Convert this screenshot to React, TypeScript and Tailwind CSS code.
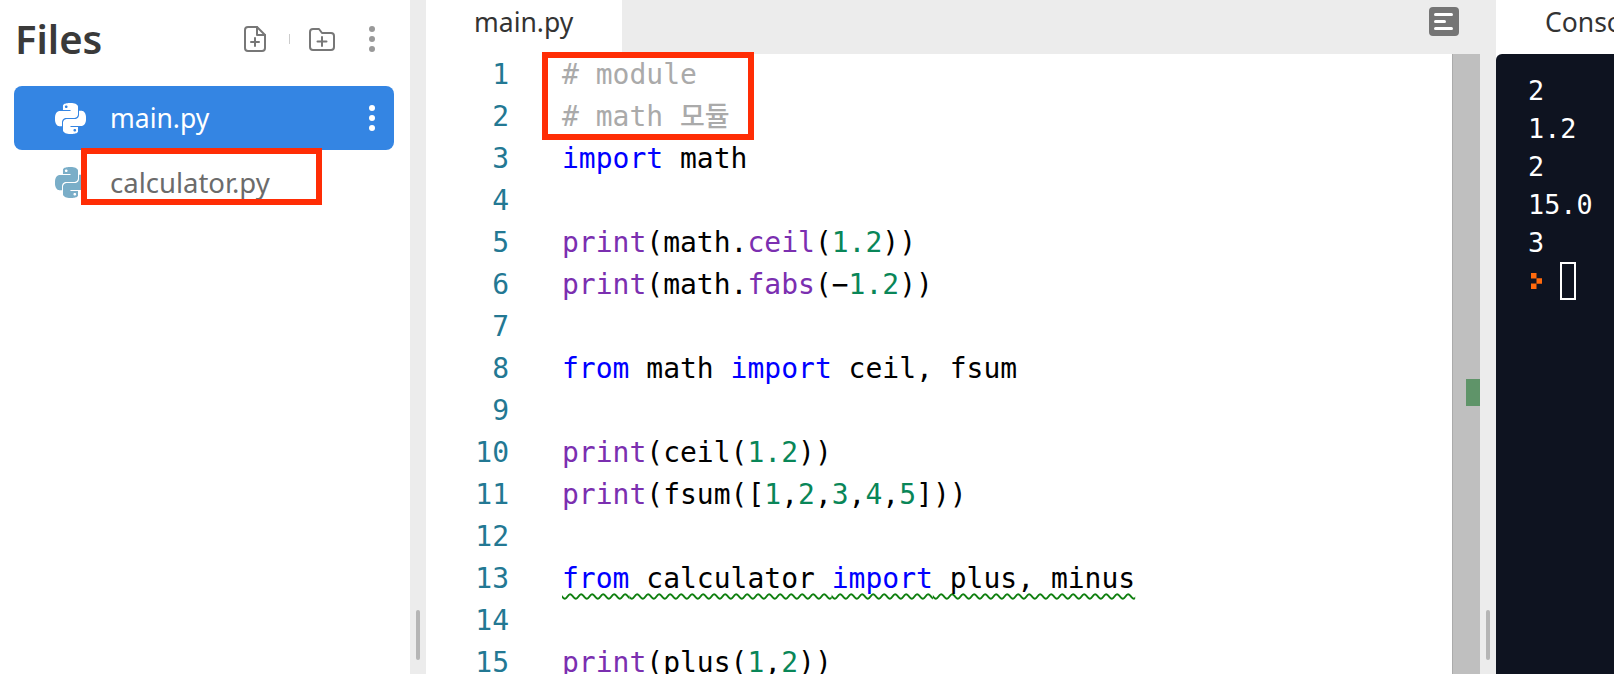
import React from "react";
import { SiPython } from "react-icons/si";

const uiFont = "font-['Noto_Sans',sans-serif]";
const monoFont = "font-['DejaVu_Sans_Mono','Noto_Sans_CJK_KR',monospace]";

const Kw = ({ children }: { children: React.ReactNode }) => (
  <span className="text-[#0000ff]">{children}</span>
);
const Fn = ({ children }: { children: React.ReactNode }) => (
  <span className="text-[#7b2fb0]">{children}</span>
);
const Num = ({ children }: { children: React.ReactNode }) => (
  <span className="text-[#098658]">{children}</span>
);
const Cm = ({ children }: { children: React.ReactNode }) => (
  <span className="text-[#aaaaaa]">{children}</span>
);

const codeLines: React.ReactNode[] = [
  <Cm># module</Cm>,
  <Cm>
    # math <span className="text-[27px] font-medium">모듈</span>
  </Cm>,
  <>
    <Kw>import</Kw> math
  </>,
  null,
  <>
    <Fn>print</Fn>(math.<Fn>ceil</Fn>(<Num>1.2</Num>))
  </>,
  <>
    <Fn>print</Fn>(math.<Fn>fabs</Fn>(−<Num>1.2</Num>))
  </>,
  null,
  <>
    <Kw>from</Kw> math <Kw>import</Kw> ceil, fsum
  </>,
  null,
  <>
    <Fn>print</Fn>(ceil(<Num>1.2</Num>))
  </>,
  <>
    <Fn>print</Fn>(fsum([<Num>1</Num>,<Num>2</Num>,<Num>3</Num>,<Num>4</Num>,<Num>5</Num>]))
  </>,
  null,
  <span className="underline decoration-wavy decoration-[#0f7f0f] decoration-2 underline-offset-[5px] [text-decoration-skip-ink:none]">
    <Kw>from</Kw> calculator <Kw>import</Kw> plus, minus
  </span>,
  null,
  <>
    <Fn>print</Fn>(plus(<Num>1</Num>,<Num>2</Num>))
  </>,
];

const consoleLines = ["2", "1.2", "2", "15.0", "3"];

function Kebab({ color }: { color: string }) {
  return (
    <svg width="8" height="28" viewBox="0 0 8 28" fill={color}>
      <circle cx="4" cy="4" r="3" />
      <circle cx="4" cy="14" r="3" />
      <circle cx="4" cy="24" r="3" />
    </svg>
  );
}

function FileTree() {
  return (
    <div className="relative flex h-full w-[410px] shrink-0 flex-col bg-white pl-[14px] pr-[16px]">
      <div className="flex h-[86px] shrink-0 items-center pb-[8px] pr-[18px]">
        <span className={`${uiFont} ml-[1px] text-[40px] font-semibold text-[#3a3a3a]`}>Files</span>
        <svg className="ml-auto" width="22" height="26" viewBox="0 0 22 26" fill="none" stroke="#777" strokeWidth="2" strokeLinejoin="round" strokeLinecap="round">
          <path d="M4 1h9l8 8v13a3 3 0 0 1-3 3H4a3 3 0 0 1-3-3V4a3 3 0 0 1 3-3z" />
          <path d="M13 1v8h8" />
          <path d="M11 12v8M7 16h8" />
        </svg>
        <div className="ml-[23px] h-[10px] w-px bg-[#cccccc]" />
        <svg className="ml-[19px]" width="26" height="23" viewBox="0 0 26 23" fill="none" stroke="#777" strokeWidth="2" strokeLinejoin="round" strokeLinecap="round">
          <path d="M1 4a3 3 0 0 1 3-3h6l3 4h9a3 3 0 0 1 3 3v11a3 3 0 0 1-3 3H4a3 3 0 0 1-3-3z" />
          <path d="M13 9v9M8.500 13.500h9" />
        </svg>
        <div className="ml-[33px]">
          <Kebab color="#999999" />
        </div>
      </div>
      <div className="flex h-[64px] shrink-0 items-center rounded-[8px] bg-[#3485e3] pl-[41px] pr-[18px] text-white">
        <SiPython size={31} />
        <span className={`${uiFont} ml-[24px] flex-1 pt-[2px] text-[26.500px]`}>main.py</span>
        <Kebab color="#ffffff" />
      </div>
      <div className="flex h-[64px] shrink-0 items-center pl-[41px] text-[#7aaec8]">
        <SiPython size={31} />
        <span className={`${uiFont} ml-[24px] pt-[2px] text-[27.500px] text-[#6b6b6b]`}>calculator.py</span>
      </div>
      <div className="absolute left-[81px] top-[148px] h-[57px] w-[241px] border-[6px] border-[#ff2d05]" />
    </div>
  );
}

function Splitter() {
  return (
    <div className="flex h-full w-[16px] shrink-0 flex-col items-center justify-end bg-[#ececec] pb-[14px]">
      <div className="h-[50px] w-[4px] rounded-[2px] bg-[#b5b5b5]" />
    </div>
  );
}

function Editor() {
  return (
    <div className="flex h-full min-w-0 flex-1 flex-col">
      <div className="flex h-[54px] shrink-0 bg-[#ececec]">
        <div className={`${uiFont} flex w-[196px] items-center bg-white pb-[8px] pl-[48px] text-[26.500px] text-[#333333]`}>
          main.py
        </div>
        <div className="flex flex-1 items-start justify-end pr-[21px] pt-[7px]">
          <div className="flex h-[29px] w-[30px] flex-col items-start justify-center gap-[4px] rounded-[4px] bg-[#757575] pl-[5px]">
            <div className="h-[3px] w-[19px] rounded-[2px] bg-white" />
            <div className="h-[3px] w-[12px] rounded-[2px] bg-white" />
            <div className="h-[3px] w-[19px] rounded-[2px] bg-white" />
          </div>
        </div>
      </div>
      <div className="relative flex min-h-0 flex-1">
        <div className={`${monoFont} min-w-0 flex-1 overflow-hidden text-[28px] leading-[42px] text-black`}>
          {codeLines.map((line, i) => (
            <div key={i} className="flex h-[42px] whitespace-pre">
              <div className="w-[83px] shrink-0 text-right text-[#237893]">{i + 1}</div>
              <div className="ml-[53px]">{line}</div>
            </div>
          ))}
        </div>
        <div className="relative w-[28px] shrink-0 border-l border-[#ababab] bg-[#bfbfbf]">
          <div className="absolute right-0 top-[325px] h-[27px] w-[14px] bg-[#5f9469]" />
        </div>
        <div className="absolute left-[116px] top-[-2px] h-[88px] w-[212px] border-[6px] border-[#ff2d05]" />
      </div>
    </div>
  );
}

function ConsolePane() {
  return (
    <div className="flex h-full w-[118px] shrink-0 flex-col overflow-hidden bg-white">
      <div className={`${uiFont} flex h-[54px] shrink-0 items-center whitespace-nowrap pb-[8px] pl-[49px] text-[26.500px] text-[#333333]`}>
        Console
      </div>
      <div className={`${monoFont} flex-1 rounded-tl-[6px] bg-[#0e1320] pl-[32px] pt-[18px] text-[26.800px] leading-[38px] text-white`}>
        {consoleLines.map((line, i) => (
          <div key={i}>{line}</div>
        ))}
        <div className="flex h-[38px] items-center pl-[3px]">
          <svg width="11" height="16" viewBox="0 0 11 16" fill="#ff6a0d">
            <rect x="0" y="0" width="5.500" height="5.500" />
            <rect x="5.500" y="5.250" width="5.500" height="5.500" />
            <rect x="0" y="10.500" width="5.500" height="5.500" />
          </svg>
          <div className="ml-[18px] h-[38px] w-[16px] border-2 border-white" />
        </div>
      </div>
    </div>
  );
}

export default function App() {
  return (
    <div className="flex h-[674px] w-[1614px] overflow-hidden bg-white">
      <FileTree />
      <Splitter />
      <Editor />
      <Splitter />
      <ConsolePane />
    </div>
  );
}
